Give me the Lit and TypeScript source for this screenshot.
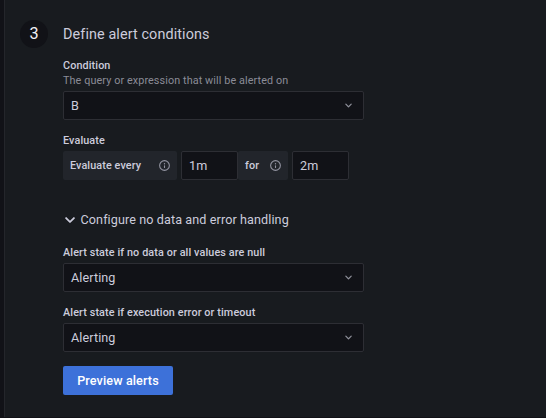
import { LitElement, html, css, svg } from "lit";
import { customElement } from "lit/decorators.js";

const angleDown = svg`<path d="M17 9.17a1 1 0 0 0-1.41 0L12 12.71 8.46 9.17a1 1 0 0 0-1.41 0 1 1 0 0 0 0 1.42l4.24 4.24a1 1 0 0 0 1.42 0L17 10.59a1 1 0 0 0 0-1.42Z"/>`;
const info = svg`<path d="M12 2a10 10 0 1 0 10 10A10 10 0 0 0 12 2Zm0 18a8 8 0 1 1 8-8 8 8 0 0 1-8 8Zm0-8.5a1 1 0 0 0-1 1v3a1 1 0 0 0 2 0v-3a1 1 0 0 0-1-1Zm0-4a1.25 1.25 0 1 0 1.25 1.25A1.25 1.25 0 0 0 12 7.5Z"/>`;

@customElement("app-root")
export class AppRoot extends LitElement {
  static styles = css`
    :host {
      display: block;
      height: 418px;
      box-sizing: border-box;
      overflow: hidden;
      padding-left: 4px;
      background: #111217;
      color: #ccccdc;
      font: 400 12.6px/20px Roboto, sans-serif;
      letter-spacing: 0.1px;
    }
    * { box-sizing: border-box; }
    svg { display: block; fill: currentColor; flex: none; }
    .panel {
      display: flex;
      gap: 15px;
      height: 417px;
      padding: 20px 0 0 15px;
      border-left: 1px solid #24262b;
      background: #181b1f;
    }
    .step {
      flex: none;
      width: 28px;
      height: 28px;
      border-radius: 50%;
      background: #111217;
      font-size: 16.2px;
      line-height: 27px;
      text-align: center;
      color: #f0f0f5;
    }
    .body { width: 301px; }
    .title { font-size: 14.4px; line-height: 30px; height: 39px; }
    .label { font-size: 10.8px; font-weight: 500; line-height: 13px; letter-spacing: 0.11px; }
    .desc { font-size: 10.8px; line-height: 15px; height: 20px; margin-top: -1px; color: #8b8c97; padding-top: 2px; }
    .box {
      display: flex;
      align-items: center;
      justify-content: space-between;
      height: 29px;
      padding: 0 7px;
      border: 1px solid #2d2e34;
      border-radius: 2px;
      background: #111217;
    }
    .box svg { color: #8e8f99; }
    .evaluate { margin: 14px 0 4px; }
    .row { display: flex; height: 29px; }
    .tag {
      display: flex;
      align-items: center;
      justify-content: space-between;
      padding: 0 6px 0 7px;
      border-radius: 2px;
      background: #22252b;
      font-size: 10.8px;
      font-weight: 500;
    }
    .tag svg { color: #9293a0; }
    .every { width: 114px; margin-right: 4px; }
    .for { width: 50px; margin-right: 4px; }
    .short { width: 57px; }
    .toggle { display: flex; align-items: center; margin: 30px 0 16px; height: 20px; }
    .toggle svg { margin: 0 -0.5px 0 -4px; }
    .state { margin-bottom: 4px; }
    .second { margin-top: 14px; }
    .button {
      display: block;
      width: 110px;
      height: 29px;
      margin-top: 14px;
      padding: 0;
      border: 0;
      border-radius: 2px;
      background: #3d71d9;
      color: #fff;
      font: 500 12.6px/29px Roboto, sans-serif;
      letter-spacing: 0.12px;
    }
  `;

  icon(shape: unknown, size: number) {
    return html`<svg width=${size} height=${size} viewBox="0 0 24 24">${shape}</svg>`;
  }

  select(value: string) {
    return html`<div class="box"><span>${value}</span>${this.icon(angleDown, 15)}</div>`;
  }

  render() {
    return html`
      <div class="panel">
        <div class="step">3</div>
        <div class="body">
          <div class="title">Define alert conditions</div>
          <div class="label">Condition</div>
          <div class="desc">The query or expression that will be alerted on</div>
          ${this.select("B")}
          <div class="label evaluate">Evaluate</div>
          <div class="row">
            <div class="tag every">Evaluate every ${this.icon(info, 13)}</div>
            <div class="box short">1m</div>
            <div class="tag for">for ${this.icon(info, 13)}</div>
            <div class="box short">2m</div>
          </div>
          <div class="toggle">${this.icon(angleDown, 22)}<span>Configure no data and error handling</span></div>
          <div class="label state">Alert state if no data or all values are null</div>
          ${this.select("Alerting")}
          <div class="label state second">Alert state if execution error or timeout</div>
          ${this.select("Alerting")}
          <button class="button">Preview alerts</button>
        </div>
      </div>
    `;
  }
}
